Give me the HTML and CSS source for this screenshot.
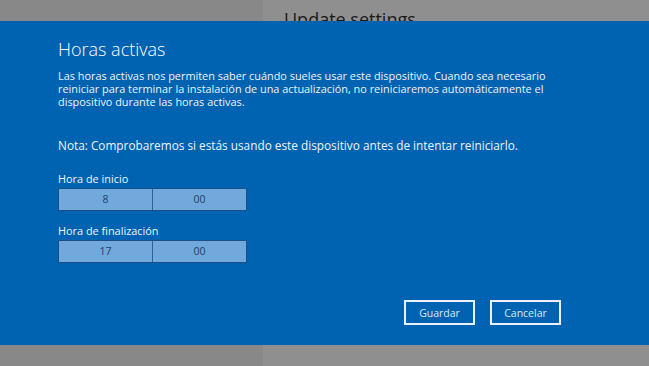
FILE: index.html
```html
<!DOCTYPE html>
<html lang="es">

<head>
  <meta charset="UTF-8">
  <meta name="viewport" content="width=device-width, initial-scale=1.0">
  <title>Horas activas</title>
  <link rel="stylesheet" href="styles.css">
</head>

<body>
  <div class="backdrop-top">
    <div class="side-left"></div>
    <div class="side-right">
      <span class="under-title">Update settings</span>
    </div>
  </div>

  <div class="dialog">
    <h1>Horas activas</h1>
    <p class="intro">
      Las horas activas nos permiten saber cuándo sueles usar este dispositivo. Cuando sea necesario<br>
      reiniciar para terminar la instalación de una actualización, no reiniciaremos automáticamente el<br>
      dispositivo durante las horas activas.
    </p>
    <p class="note">Nota: Comprobaremos si estás usando este dispositivo antes de intentar reiniciarlo.</p>

    <div class="field">
      <label>Hora de inicio</label>
      <div class="time-box">
        <span>8</span>
        <span>00</span>
      </div>
    </div>

    <div class="field">
      <label>Hora de finalización</label>
      <div class="time-box">
        <span>17</span>
        <span>00</span>
      </div>
    </div>

    <div class="actions">
      <button class="btn">Guardar</button>
      <button class="btn">Cancelar</button>
    </div>
  </div>

  <div class="backdrop-bottom">
    <div class="side-left"></div>
    <div class="side-right"></div>
  </div>
</body>

</html>
```

FILE: styles.css
```css
body {
  margin: 0;
  font-family: "Open Sans", "Noto Sans", Arial, sans-serif;
  background-color: #8f8f8f;
  width: 649px;
  height: 366px;
  overflow: hidden;
}

/* gray window behind the dialog */
.backdrop-top,
.backdrop-bottom {
  display: flex;
  height: 21px;
  overflow: hidden;
}

.side-left {
  width: 263px;
  background-color: #888888;
}

.side-right {
  flex: 1;
  background-color: #8f8f8f;
  padding-left: 21px;
}

.under-title {
  display: block;
  margin-top: 7px;
  font-size: 18px;
  line-height: 24px;
  color: #1a1a1a;
}

/* Dialog */
.dialog {
  height: 324px;
  box-sizing: border-box;
  background-color: #0063b1;
  padding: 16px 58px 0 58px;
  color: #ffffff;
  position: relative;
}

h1 {
  margin: 0;
  font-size: 18px;
  font-weight: 300;
  line-height: 24px;
  color: #ffffff;
}

.intro {
  margin: 8px 0 0;
  font-size: 10.9px;
  line-height: 13px;
  color: #eef4fa;
}

.note {
  margin: 30px 0 0;
  font-size: 11.8px;
  line-height: 15px;
  color: #eef4fa;
}

.field {
  margin-top: 19px;
}

.field + .field {
  margin-top: 13px;
}

.field label {
  display: block;
  font-size: 10.9px;
  line-height: 13px;
  margin-bottom: 3px;
  color: #eef4fa;
}

.time-box {
  display: flex;
  width: 189px;
  height: 23px;
  box-sizing: border-box;
  border: 1px solid #1b4f85;
  background-color: #72a9dc;
}

.time-box span {
  flex: 1;
  text-align: center;
  font-size: 10.5px;
  line-height: 21px;
  color: #1f3f66;
}

.time-box span + span {
  border-left: 1px solid #2d639b;
}

.actions {
  position: absolute;
  left: 404px;
  top: 279px;
  display: flex;
  gap: 15px;
}

.btn {
  width: 71px;
  height: 25px;
  box-sizing: border-box;
  border: 2px solid #eaf2fb;
  background-color: #0063b1;
  color: #dbe8f6;
  font-family: inherit;
  font-size: 10.5px;
  padding: 0;
}
```
